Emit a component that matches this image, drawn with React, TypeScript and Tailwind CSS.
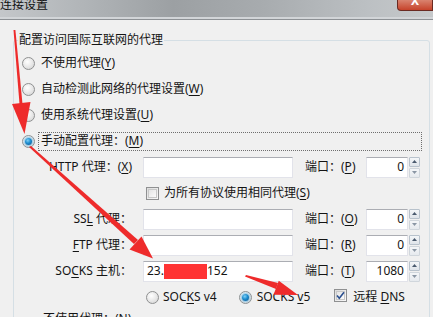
import React from "react";

const font = { fontFamily: '"Noto Sans", "Noto Sans CJK SC", sans-serif' };

function U({ c }: { c: string }) {
  return <span className="underline underline-offset-2 decoration-1">{c}</span>;
}

function Radio({ checked = false }: { checked?: boolean }) {
  return (
    <span className="relative inline-flex h-[13px] w-[13px] shrink-0 items-center justify-center rounded-full border border-[#8f9091] bg-[radial-gradient(circle_at_40%_35%,#ffffff_0%,#e6e6e6_55%,#cfcfcf_100%)]">
      {checked && (
        <span className="h-[7px] w-[7px] rounded-full bg-[radial-gradient(circle_at_40%_35%,#7fd0f5_0%,#1b8ccf_45%,#0d4f86_100%)] shadow-[0_0_2px_1px_rgba(120,190,230,0.9)]" />
      )}
    </span>
  );
}

function Check({ checked = false }: { checked?: boolean }) {
  return (
    <span className="relative inline-flex h-[13px] w-[13px] shrink-0 items-center justify-center border border-[#8f9091] bg-[linear-gradient(135deg,#dcdcdc,#f8f8f8)]">
      <span className="absolute inset-[1px] border border-[#c8c8c8] bg-[linear-gradient(135deg,#e4e4e4,#fbfbfb)]" />
      {checked && (
        <svg viewBox="0 0 11 11" className="relative h-[11px] w-[11px]">
          <path d="M2 5.5 L4.3 8.2 L9 2.2" fill="none" stroke="#2a4f8f" strokeWidth="1.6" />
        </svg>
      )}
    </span>
  );
}

function Input({ children, w }: { children?: React.ReactNode; w: string }) {
  return (
    <div
      className={`flex h-[21px] items-center border border-[#e2e3ea] border-t-[#abadb3] bg-white px-[3px] ${w}`}
    >
      {children}
    </div>
  );
}

function Port({ letter, value }: { letter: string; value: string }) {
  return (
    <div className="flex items-center">
      <span className="w-[61px]">
        端口：(<U c={letter} />)
      </span>
      <div className="flex h-[21px] w-[42px] items-center justify-end border border-[#e2e3ea] border-t-[#abadb3] bg-white pr-[3px]">
        {value}
      </div>
      <div className="ml-[1px] flex h-[21px] w-[11px] flex-col gap-[1px]">
        <div className="flex flex-1 items-center justify-center rounded-[1px] border border-[#b8c2cc] bg-[linear-gradient(#f4f6f8,#dfe4ea)]">
          <svg viewBox="0 0 5 3" className="h-[3px] w-[5px]">
            <path d="M0 3 L2.5 0 L5 3 Z" fill="#4a5a6e" />
          </svg>
        </div>
        <div className="flex flex-1 items-center justify-center rounded-[1px] border border-[#d0d6dc] bg-[linear-gradient(#f4f6f8,#e6eaee)]">
          <svg viewBox="0 0 5 3" className="h-[3px] w-[5px]">
            <path d="M0 0 L2.5 3 L5 0 Z" fill="#8a96a4" />
          </svg>
        </div>
      </div>
    </div>
  );
}

function ProxyRow({
  label,
  input,
  letter,
  value,
}: {
  label: React.ReactNode;
  input?: React.ReactNode;
  letter: string;
  value: string;
}) {
  return (
    <div className="flex h-[26px] items-center">
      <div className="w-[118px] text-right">{label}</div>
      <div className="ml-[11px]">
        <Input w="w-[150px]">{input}</Input>
      </div>
      <div className="ml-[12px]">
        <Port letter={letter} value={value} />
      </div>
    </div>
  );
}

export default function App() {
  return (
    <div
      className="relative h-[317px] w-[433px] overflow-hidden bg-[#f0f0f0] text-[12px] leading-[16px] text-[#141414]"
      style={font}
    >
      {/* title bar */}
      <div className="relative h-[20px] border-b border-[#8d9195] bg-[linear-gradient(90deg,#c4c7ca_0%,#b0b4b7_20%,#9ca0a3_40%,#a7abae_60%,#bcc0c3_85%,#c6c9cb_100%)]">
        <div className="absolute inset-x-0 bottom-0 h-[2px] bg-[#d2d5d8]" />
        <span className="relative -top-[3px] left-0 text-[12px] text-[#111]">连接设置</span>
        <div className="absolute right-0 top-0 flex h-[11px] w-[36px] justify-center overflow-hidden rounded-bl-[4px] border border-t-0 border-[#6a2a22] bg-[linear-gradient(#d9836f,#c6432b)]">
          <span className="-mt-[7px] text-[12px] font-bold leading-[16px] text-white">X</span>
        </div>
      </div>

      <fieldset className="ml-[13px] mt-[12px] w-[417px] rounded-[3px] border border-[#d5dfe5] p-0 pt-[2px]">
        <legend className="ml-[4px] px-[1px]">配置访问国际互联网的代理</legend>

        <div className="flex h-[26px] items-center pl-[8px]">
          <Radio />
          <span className="ml-[6px]">
            不使用代理(<U c="Y" />)
          </span>
        </div>
        <div className="flex h-[26px] items-center pl-[8px]">
          <Radio />
          <span className="ml-[6px]">
            自动检测此网络的代理设置(<U c="W" />)
          </span>
        </div>
        <div className="flex h-[26px] items-center pl-[8px]">
          <Radio />
          <span className="ml-[6px]">
            使用系统代理设置(<U c="U" />)
          </span>
        </div>
        <div className="flex h-[26px] items-center pl-[8px]">
          <Radio checked />
          <span className="ml-[3px] mr-[7px] flex h-[19px] flex-1 items-center border border-dotted border-[#6e6e6e] pl-[2px]">
            手动配置代理：(<U c="M" />)
          </span>
        </div>

        <ProxyRow
          label={
            <>
              HTTP 代理：(<U c="X" />)
            </>
          }
          letter="P"
          value="0"
        />

        <div className="flex h-[26px] items-center pl-[132px]">
          <Check />
          <span className="ml-[5px]">
            为所有协议使用相同代理(<U c="S" />)
          </span>
        </div>

        <ProxyRow
          label={
            <>
              SS<U c="L" /> 代理：
            </>
          }
          letter="O"
          value="0"
        />
        <ProxyRow
          label={
            <>
              <U c="F" />TP 代理：
            </>
          }
          letter="R"
          value="0"
        />
        <ProxyRow
          label={
            <>
              SO<U c="C" />KS 主机：
            </>
          }
          input={
            <div className="flex items-center">
              <span>23.</span>
              <span className="h-[15px] w-[43px] bg-[#ff3333]" />
              <span>152</span>
            </div>
          }
          letter="T"
          value="1080"
        />

        <div className="flex h-[26px] items-center pl-[132px]">
          <Radio />
          <span className="ml-[4px]">
            SOC<U c="K" />S v4
          </span>
          <span className="ml-[22px]">
            <Radio checked />
          </span>
          <span className="ml-[5px]">
            SOCKS <U c="v" />5
          </span>
          <span className="ml-[24px]">
            <Check checked />
          </span>
          <span className="ml-[6px]">
            远程 <U c="D" />NS
          </span>
        </div>

        <div className="flex h-[20px] items-start pl-[29px] pt-[1px]">
          不使用代理：(<U c="N" />)
        </div>
      </fieldset>

      {/* annotation arrows */}
      <svg className="pointer-events-none absolute inset-0 h-[317px] w-[433px]" viewBox="0 0 433 317">
        <g fill="#ee2b2b">
          <polygon points="13.5,30 15.4,30 22.5,104 19.5,104" />
          <polygon points="12,104 30.5,102 24.5,134" />
          <polygon points="29,147 31,146 138,240 134,244" />
          <polygon points="129.5,249.5 141.5,236.5 153,258.5" />
          <polygon points="245,276.5 246,275 278,283 276,289" />
          <polygon points="273.5,294.8 278.8,280.8 298,295" />
        </g>
      </svg>
    </div>
  );
}
